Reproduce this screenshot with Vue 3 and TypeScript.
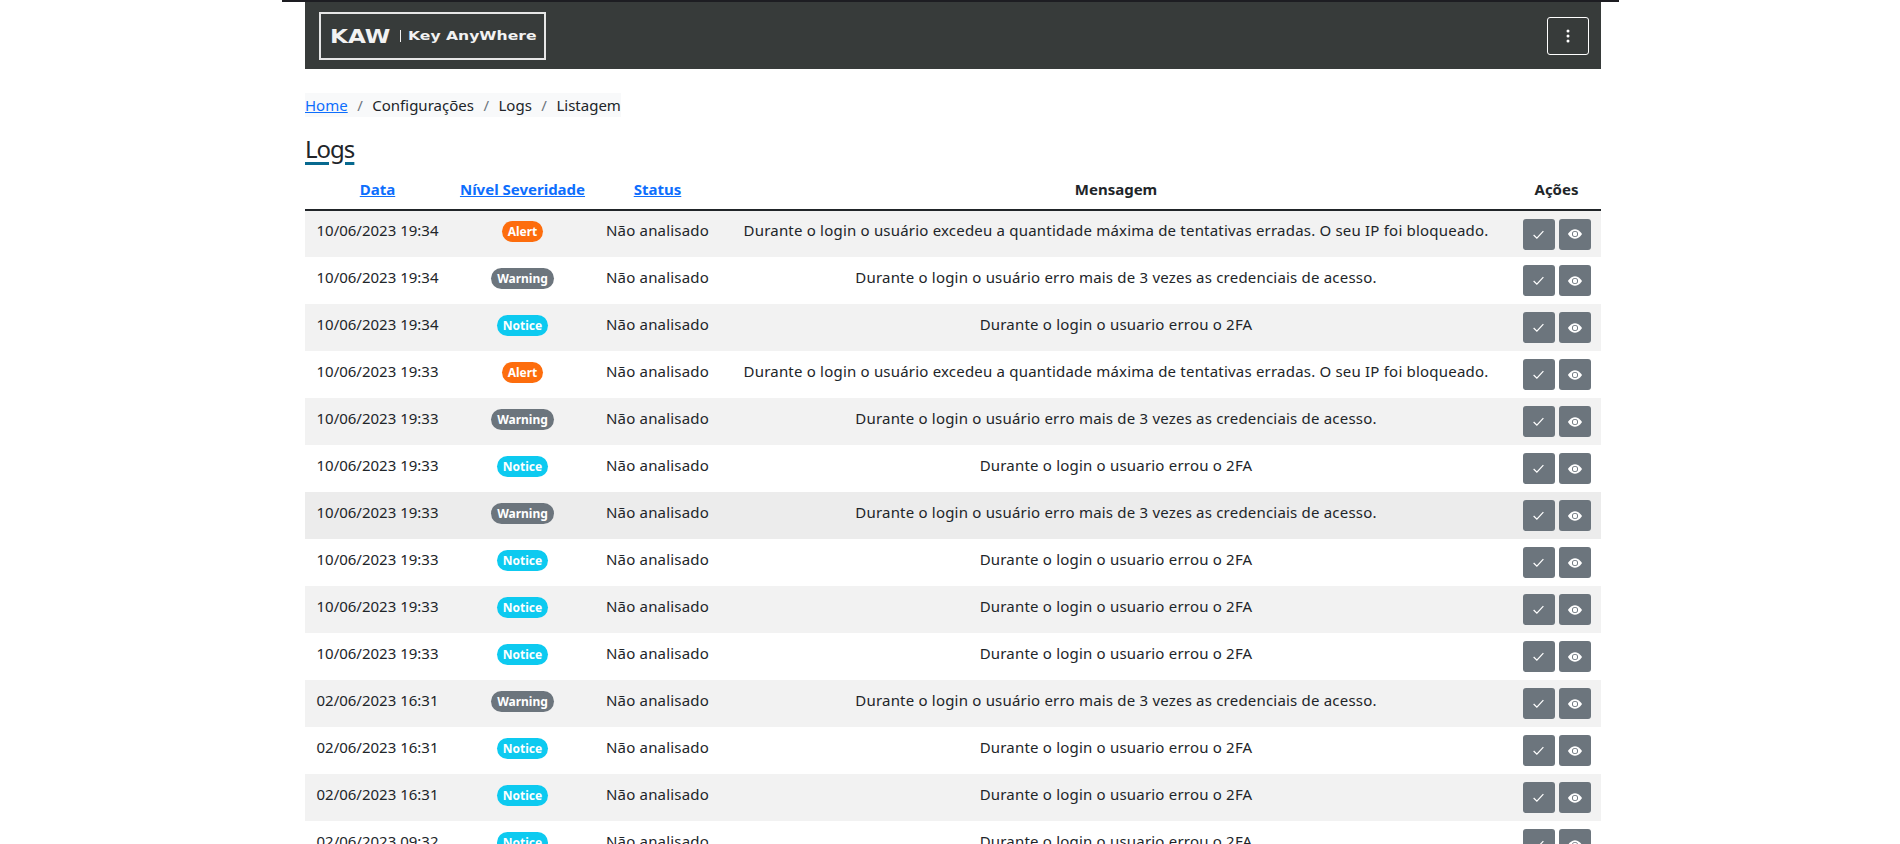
<script setup lang="ts">
type Sev = 'Alert' | 'Warning' | 'Notice'
interface Row { date: string; sev: Sev; hover?: boolean }
const messages: Record<Sev, string> = {
  Alert: 'Durante o login o usuário excedeu a quantidade máxima de tentativas erradas. O seu IP foi bloqueado.',
  Warning: 'Durante o login o usuário erro mais de 3 vezes as credenciais de acesso.',
  Notice: 'Durante o login o usuario errou o 2FA',
}
const rows: Row[] = [
  { date: '10/06/2023 19:34', sev: 'Alert' },
  { date: '10/06/2023 19:34', sev: 'Warning' },
  { date: '10/06/2023 19:34', sev: 'Notice' },
  { date: '10/06/2023 19:33', sev: 'Alert' },
  { date: '10/06/2023 19:33', sev: 'Warning' },
  { date: '10/06/2023 19:33', sev: 'Notice' },
  { date: '10/06/2023 19:33', sev: 'Warning', hover: true },
  { date: '10/06/2023 19:33', sev: 'Notice' },
  { date: '10/06/2023 19:33', sev: 'Notice' },
  { date: '10/06/2023 19:33', sev: 'Notice' },
  { date: '02/06/2023 16:31', sev: 'Warning' },
  { date: '02/06/2023 16:31', sev: 'Notice' },
  { date: '02/06/2023 16:31', sev: 'Notice' },
  { date: '02/06/2023 09:32', sev: 'Notice' },
]
</script>

<template>
  <div class="page">
    <div class="topline"></div>
    <div class="content">
      <nav class="navbar">
        <div class="brand">
          <span class="kaw">KAW</span>
          <span class="sep"></span>
          <span class="brand-name">Key AnyWhere</span>
        </div>
        <button class="menu-btn" aria-label="Menu">
          <svg width="4" height="14" viewBox="0 0 4 14"><circle cx="2" cy="2" r="1.5" fill="#fff"/><circle cx="2" cy="7" r="1.5" fill="#fff"/><circle cx="2" cy="12" r="1.5" fill="#fff"/></svg>
        </button>
      </nav>
      <ol class="crumbs">
        <li><a href="#">Home</a></li>
        <li class="slash">/</li>
        <li>Configurações</li>
        <li class="slash">/</li>
        <li>Logs</li>
        <li class="slash">/</li>
        <li>Listagem</li>
      </ol>
      <h1 class="title">Logs</h1>
      <table class="logs">
        <colgroup>
          <col class="c1" /><col class="c2" /><col class="c3" /><col class="c4" /><col class="c5" />
        </colgroup>
        <thead>
          <tr>
            <th><a href="#">Data</a></th>
            <th><a href="#">Nível Severidade</a></th>
            <th><a href="#">Status</a></th>
            <th>Mensagem</th>
            <th>Ações</th>
          </tr>
        </thead>
        <tbody>
          <tr v-for="(r, i) in rows" :key="i" :class="{ hover: r.hover }">
            <td>{{ r.date }}</td>
            <td class="cell-badge"><span class="badge" :class="r.sev.toLowerCase()">{{ r.sev }}</span></td>
            <td class="spaced">Não analisado</td>
            <td class="spaced">{{ messages[r.sev] }}</td>
            <td class="cell-actions">
              <div class="actions">
                <button class="act" aria-label="Analisar">
                  <svg width="13" height="13" viewBox="0 0 16 16"><path d="M2 8.600 6 12.400 14 3.800" fill="none" stroke="#fff" stroke-width="1.500"/></svg>
                </button>
                <button class="act" aria-label="Ver">
                  <svg width="14" height="14" viewBox="0 0 16 16" fill="#fff"><path d="M10.500 8a2.500 2.500 0 1 1-5 0 2.500 2.500 0 0 1 5 0z"/><path d="M0 8s3-5.500 8-5.500S16 8 16 8s-3 5.500-8 5.500S0 8 0 8zm8 3.500a3.500 3.500 0 1 0 0-7 3.500 3.500 0 0 0 0 7z"/></svg>
                </button>
              </div>
            </td>
          </tr>
        </tbody>
      </table>
    </div>
  </div>
</template>

<style>
html, body { margin: 0; background: #fff; overflow: hidden; }
</style>

<style scoped>
.page {
  width: 1337px;
  height: 844px;
  margin-left: 282px;
  overflow: hidden;
  font-family: "Noto Sans", "Open Sans", sans-serif;
  color: #212529;
  font-size: 15px;
}
.topline { height: 2px; background: #1d1d22; }
.content { width: 1296px; margin-left: 23px; }
.navbar {
  height: 67px;
  background: #373b3a;
  display: flex;
  align-items: center;
  justify-content: space-between;
  padding: 0 12px 0 14px;
  box-sizing: border-box;
}
.brand {
  width: 227px;
  height: 48px;
  box-sizing: border-box;
  border: 2px solid #e6e6e6;
  display: flex;
  align-items: center;
  padding-left: 11px;
  color: #f2f2f2;
  font-family: "DejaVu Sans", sans-serif;
}
.kaw { font-size: 19px; font-weight: 700; transform: scaleX(1.22); transform-origin: left; width: 58px; flex: none; margin-left: -2px; }
.sep { width: 1px; height: 12px; background: #f2f2f2; margin: 0 7px 0 12px; flex: none; }
.brand-name { font-size: 13px; font-weight: 700; white-space: nowrap; transform: scaleX(1.2); transform-origin: left; }
.menu-btn {
  width: 42px;
  height: 38px;
  box-sizing: border-box;
  background: transparent;
  border: 1px solid #fff;
  border-radius: 3px;
  display: flex;
  align-items: center;
  justify-content: center;
  padding: 0;
}
.crumbs {
  list-style: none;
  display: flex;
  margin: 24px 0 0;
  padding: 0;
  width: fit-content;
  height: 24px;
  line-height: 24px;
  background: #f8f9fa;
  white-space: nowrap;
}
.crumbs a { color: #0d6efd; text-decoration: underline; }
.slash { color: #6c757d; margin: 0 9.5px; }
.title {
  margin: 17px 0 0;
  font-size: 24px;
  letter-spacing: -1px;
  font-weight: 400;
  line-height: 30px;
  height: 34px;
  text-decoration: underline 3px #07698f;
  text-underline-offset: 4px;
}
.logs {
  width: 1296px;
  border-collapse: collapse;
  table-layout: fixed;
  text-align: center;
}
.c1, .c2 { width: 145px; }
.c3 { width: 125px; }
.c4 { width: 792px; }
.c5 { width: 89px; }
th {
  height: 41px;
  padding: 0;
  font-weight: 700;
  font-size: 15px;
  border-bottom: 2px solid #212529;
  white-space: nowrap;
}
th a { color: #0d6efd; text-decoration: underline; }
td {
  height: 47px;
  padding: 0 0 8px;
  box-sizing: border-box;
  white-space: nowrap;
}
td.spaced { letter-spacing: 0.2px; }
td.cell-badge { padding-bottom: 6px; }
td.cell-actions { padding: 0; }
tbody tr:nth-child(odd) { background: #f2f2f2; }
tbody tr.hover { background: #ececec; }
.badge {
  display: inline-block;
  padding: 0 6px;
  height: 21px;
  line-height: 21px;
  border-radius: 11px;
  color: #fff;
  font-size: 12px;
  font-weight: 700;
  vertical-align: middle;
}
.alert { background: #fd6d0d; }
.warning { background: #6c757d; }
.notice { background: #0dcaf0; }
.actions { display: flex; justify-content: center; gap: 4px; }
.act {
  width: 32px;
  height: 31px;
  background: #6c757d;
  border: 0;
  border-radius: 3px;
  padding: 0;
  display: flex;
  align-items: center;
  justify-content: center;
}
</style>
